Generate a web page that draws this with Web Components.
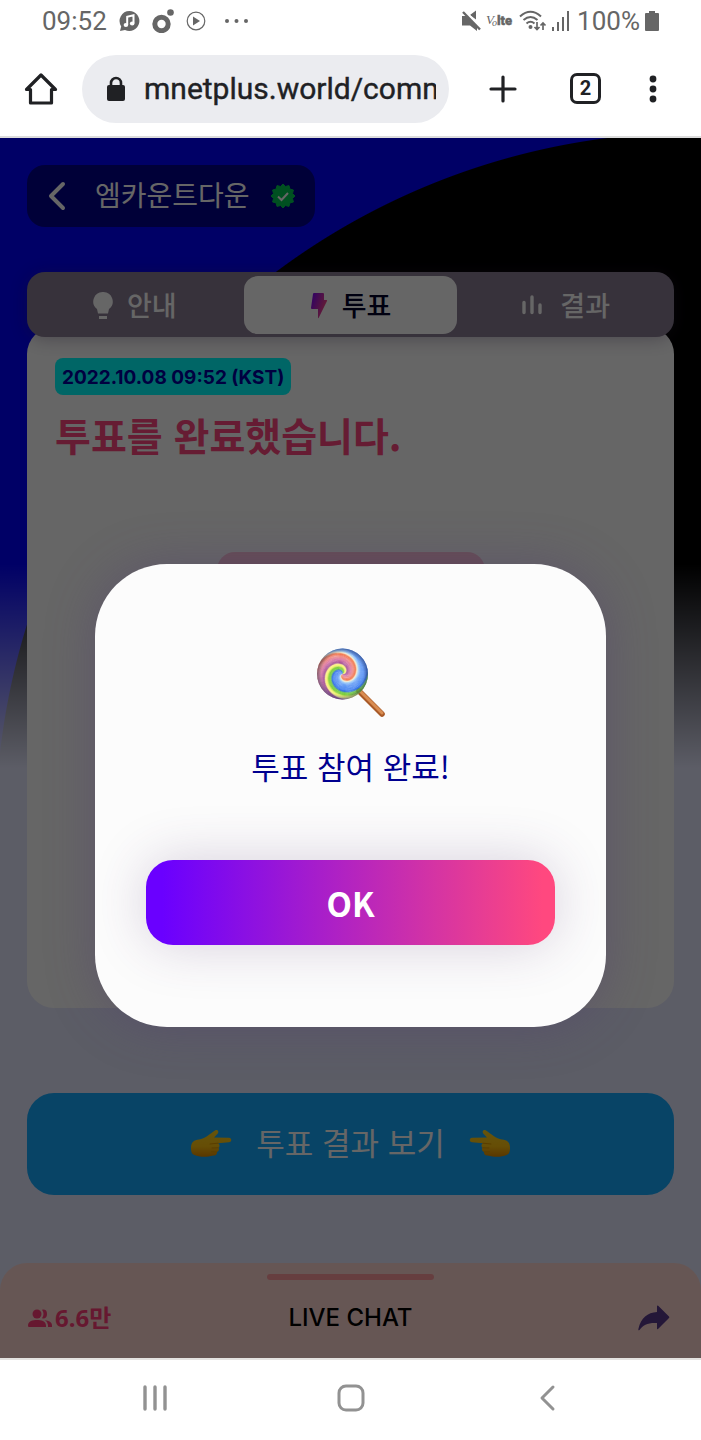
<!DOCTYPE html>
<html lang="ko">
<head>
<meta charset="utf-8">
<meta name="viewport" content="width=device-width, initial-scale=1">
<title>엠카운트다운 투표</title>
<style>
  body { margin: 0; background: #fff; font-family: "Noto Sans CJK KR", sans-serif; }
</style>
</head>
<body>
<phone-screen>
  <status-bar slot="top"></status-bar>
  <browser-bar slot="top" url="mnetplus.world/comm" tabs="2"></browser-bar>
  <vote-page>
    <channel-header>엠카운트다운</channel-header>
    <vote-tabs></vote-tabs>
    <vote-card date="2022.10.08 09:52 (KST)">투표를 완료했습니다.</vote-card>
    <result-button>투표 결과 보기</result-button>
    <chat-sheet count="6.6만">LIVE CHAT</chat-sheet>
    <alert-dialog slot="overlay" action="OK">투표 참여 완료!</alert-dialog>
  </vote-page>
  <system-nav slot="bottom"></system-nav>
</phone-screen>

<script>
const define = (name, render) => customElements.define(name, class extends HTMLElement {
  constructor() { super(); this.attachShadow({ mode: "open" }); }
  connectedCallback() {
    this.shadowRoot.innerHTML =
      `<style>*{box-sizing:border-box} :host{display:block;box-sizing:border-box} svg{display:block;flex:none} button{border:0;background:none;padding:0;margin:0;font:inherit;color:inherit}</style>` + render(this);
  }
});

define("phone-screen", () => `
  <style>
    :host { display: flex; flex-direction: column; min-height: 100vh; }
    main { flex: 1; display: flex; flex-direction: column; }
  </style>
  <slot name="top"></slot><main><slot></slot></main><slot name="bottom"></slot>`);

define("status-bar", () => `
  <style>
    :host { display: flex; align-items: center; justify-content: space-between; height: 42px; padding: 0 42px; color: #666; font: 26px/42px Roboto, sans-serif; }
    div { display: flex; align-items: center; }
    .left { gap: 12px; } .right { gap: 5px; }
    .more { margin-left: 6px; }
  </style>
  <div class="left">
    <span>09:52</span>
    <svg width="21" height="22" viewBox="0 0 21 22"><path fill="#666" d="M10.500 1a10 10 0 1 1-4.500 19L1 21l1.200-4.600A10 10 0 0 1 10.500 1z"/><path d="M8.200 15V6.800l6.300-1.500v7.800" fill="none" stroke="#fff" stroke-width="2"/><ellipse cx="6.900" cy="15" rx="2.300" ry="2" fill="#fff"/><ellipse cx="13.200" cy="13.500" rx="2.300" ry="2" fill="#fff"/></svg>
    <svg width="22" height="24" viewBox="0 0 22 24"><circle cx="9.500" cy="15" r="6.700" fill="none" stroke="#666" stroke-width="5"/><circle cx="18.500" cy="3.500" r="3.300" fill="#666"/></svg>
    <svg width="20" height="20" viewBox="0 0 20 20"><circle cx="10" cy="10" r="8.800" fill="none" stroke="#666" stroke-width="1.200"/><path d="M7 5.500v9l7-4.500z" fill="#666"/></svg>
    <svg class="more" width="26" height="6" viewBox="0 0 26 6" fill="#666"><circle cx="3" cy="3" r="2"/><circle cx="12.500" cy="3" r="2"/><circle cx="22" cy="3" r="2"/></svg>
  </div>
  <div class="right">
    <svg width="19" height="22" viewBox="0 0 19 22"><path fill="#666" d="M0 6h4l11 11v4l-7-5.500H0zM8 5l6-4.500v9z"/><path d="M2 0l17 18" stroke="#fff" stroke-width="2"/><path d="M1 2l17 17.500" stroke="#666" stroke-width="2.400"/></svg>
    <svg width="28" height="20" viewBox="0 0 28 20" fill="#666"><text x="0" y="13" font-family="Liberation Serif, serif" font-style="italic" font-size="13">V</text><text x="6" y="15" font-family="Liberation Serif, serif" font-style="italic" font-size="10">o</text><text x="11" y="14" font-family="Roboto, sans-serif" font-weight="900" font-size="13" stroke="#666" stroke-width=".4">lte</text></svg>
    <svg width="28" height="22" viewBox="0 0 28 22" fill="none" stroke="#666" stroke-width="2"><path d="M1 6.500Q11.500-3 22 6.500M4.500 10Q11.500 4 18.500 10M7.500 13.500q4-3.500 8 0"/><circle cx="11.500" cy="17" r="1" fill="#666"/><path d="M18 12v7M15.500 17l2.500 2.500 2.500-2.500M24 20v-7M21.500 15.500L24 13l2.500 2.500" stroke-width="1.700"/></svg>
    <svg width="20" height="20" viewBox="0 0 20 20" fill="#666"><path d="M0 16h2v4H0zM5 11h2v9H5zM10 6h2v14h-2zM15 0h2v20h-2z"/></svg>
    <span>100%</span>
    <svg width="14" height="20" viewBox="0 0 14 20"><path fill="#666" d="M4 0h6v2h3q1 0 1 1v16q0 1-1 1H1q-1 0-1-1V3q0-1 1-1h3z"/></svg>
  </div>`);

define("browser-bar", el => `
  <style>
    :host { display: flex; align-items: center; height: 96px; padding: 1px 41px 2px 24px; border-bottom: 2px solid #dcdcdc; color: #202124; }
    .pill { flex: 1; display: flex; align-items: center; gap: 18px; height: 68px; margin: 0 40px 0 24px; padding: 0 13px 0 24px; border-radius: 34px; background: #ebecf0; min-width: 0; }
    input { flex: 1; min-width: 0; padding: 0; border: 0; outline: 0; background: none; color: #202124; font: 30px/40px Roboto, sans-serif; -webkit-text-stroke: 0.4px #202124; }
    .tabs { display: grid; place-items: center; width: 31px; height: 31px; margin: 0 45px 0 53px; border: 3px solid #202124; border-radius: 7px; font: 700 20px/25px Roboto, sans-serif; }
  </style>
  <button aria-label="홈"><svg width="34" height="34" viewBox="0 0 34 34" fill="none" stroke="#202124" stroke-width="3.200" stroke-linejoin="round"><path d="M2.500 17.500L17 3l14.500 14.500h-4V31h-21V17.500z"/></svg></button>
  <label class="pill">
    <svg width="20" height="26" viewBox="0 0 20 26"><path d="M5 12V7a5 5 0 0 1 10 0v5" fill="none" stroke="#202124" stroke-width="2.600"/><rect x="1" y="9" width="18" height="16" rx="2" fill="#202124"/></svg>
    <input type="text" aria-label="주소" value="${el.getAttribute("url")}">
  </label>
  <button aria-label="새 탭"><svg width="28" height="28" viewBox="0 0 28 28" stroke="#202124" stroke-width="3.200" stroke-linecap="round"><path d="M14 2v24M2 14h24"/></svg></button>
  <button class="tabs" aria-label="탭 목록">${el.getAttribute("tabs")}</button>
  <button aria-label="메뉴"><svg width="14" height="28" viewBox="0 0 14 28" fill="#202124"><circle cx="7" cy="4" r="3.400"/><circle cx="7" cy="14" r="3.400"/><circle cx="7" cy="24" r="3.400"/></svg></button>`);

define("vote-page", () => `
  <style>
    :host { position: relative; flex: 1; display: flex; flex-direction: column; padding-top: 27px; overflow: hidden;
      background: linear-gradient(transparent 425px, #e6e8ff 630px), radial-gradient(circle 700px at 695px 694px, #000 699px, #0000ff 700px); }
    .shade { position: absolute; inset: 0; display: flex; justify-content: center; align-items: center; padding: 94px 95px 0; background: rgba(0,0,0,.6); }
  </style>
  <slot></slot><div class="shade"><slot name="overlay"></slot></div>`);

define("channel-header", () => `
  <style>
    :host { align-self: flex-start; display: flex; align-items: center; height: 62px; margin: 0 27px; padding: 0 19px 0 20px; border-radius: 18px; background: rgba(0,0,0,.45); color: #fff; font-size: 28px; }
    span { line-height: 42px; padding-bottom: 4px; }
    button { margin-right: 28px; }
    svg.badge { margin-left: 20px; }
  </style>
  <button aria-label="뒤로"><svg width="20" height="32" viewBox="0 0 20 32" fill="none" stroke="#fff" stroke-width="4" stroke-linecap="round" stroke-linejoin="round"><path d="M16 4L4 16l12 12"/></svg></button>
  <span><slot></slot></span>
  <svg class="badge" width="26" height="26" viewBox="0 0 26 26"><polygon fill="#00c853" stroke="#00c853" stroke-linejoin="round" points="${Array.from({ length: 24 }, (_, i) => {
    const a = i * Math.PI / 12, r = i % 2 ? 9.8 : 12; return (13 + r * Math.sin(a)).toFixed(1) + "," + (13 - r * Math.cos(a)).toFixed(1);
  }).join(" ")}"/><path d="M8 13.500l3.500 3.500 6.500-7" fill="none" stroke="#fff" stroke-width="2"/></svg>`);

define("vote-tabs", () => `
  <style>
    :host { position: relative; margin: 45px 27px 0; }
    nav { display: grid; grid-template-columns: repeat(3, 1fr); height: 65px; padding: 4px 0 3px; border-radius: 18px; background: #8a7d94; box-shadow: 0 2px 18px rgba(60,40,80,.35); }
    button { display: flex; justify-content: center; align-items: center; gap: 14px; margin: 0 1px; border-radius: 14px; color: #fff; font-size: 27px; font-weight: 500; line-height: 40px; }
    .on { background: #fff; color: #000028; }
  </style>
  <nav>
    <button><svg width="20" height="27" viewBox="0 0 20 27" fill="#fff"><path d="M10 0a9.500 9.500 0 0 1 6 17l-1 4.500H5L4 17A9.500 9.500 0 0 1 10 0zM6 24h8v3H6z"/></svg>안내</button>
    <button class="on" aria-current="page"><svg width="18" height="27" viewBox="0 0 18 27"><defs><linearGradient id="b" x1="0" x2="1" y2=".5"><stop stop-color="#7000ff"/><stop offset="1" stop-color="#ff4880"/></linearGradient></defs><path fill="url(#b)" d="M4 1h9q1 0 1 1v6h2.500q1 0 .5 1L8.600 26q-.6.500-.6-.5V17H2Q1 17 1 16L3 2q.2-1 1-1z"/></svg>투표</button>
    <button><svg width="24" height="20" viewBox="0 0 24 20" stroke="#fff" stroke-width="3.400" stroke-linecap="round"><path d="M2 7.500v10M10 2v15.500M18 10v7.500"/></svg>결과</button>
  </nav>`);

define("vote-card", el => `
  <style>
    :host { flex: 1; margin: -10px 27px 0; padding: 31px 28px; border-radius: 27px; background: #fff; }
    time { display: inline-block; padding: 2px 7px 0; border-radius: 8px; background: #0ff; color: #0000a0; font: 700 19px/35px Inter, sans-serif; vertical-align: top; }
    h1 { margin: 11px 0 90px; color: #ff4880; font-size: 39px; font-weight: 700; line-height: 56px; }
    .ticket { width: 268px; height: 268px; margin: 0 auto; border-radius: 18px; background: #ffc4d6; }
  </style>
  <time datetime="2022-10-08T09:52+09:00">${el.getAttribute("date")}</time>
  <h1><slot></slot></h1>
  <div class="ticket"></div>`);

const hand = flip => `<svg width="42" height="30" viewBox="0 0 42 30"${flip ? ' style="transform:scaleX(-1)"' : ""}>
  <defs><linearGradient id="h" x2="0" y2="1"><stop stop-color="#ffd21f"/><stop offset=".6" stop-color="#ffc20f"/><stop offset="1" stop-color="#e08a00"/></linearGradient></defs>
  <path fill="url(#h)" d="M1 19C1 13 4 11 9 10.500 15 9.500 20 5 25 1.500c2.500-1.300 4.300 1 2.800 3L24 8.500l15 .3c3 .2 3 4.200 0 4.400l-11 1c2 1.300 2 3.300.5 4.500 1.200 1.800.3 3.500-1.500 4.200.3 2.500-1.500 3.600-3.500 3.600C16 28.500 9 28 4.500 26 1.500 25 1 22 1 19z"/>
  <path d="M28 14.200l-8 .8M28 18.800l-6 .2M26.500 23l-5-.3" fill="none" stroke="#e09a00" stroke-width="1" stroke-linecap="round"/></svg>`;

define("result-button", () => `
  <style>
    :host { margin: 85px 27px 68px; }
    button { display: flex; justify-content: center; align-items: center; gap: 24px; width: 100%; height: 102px; border-radius: 27px; background: #14aaff; color: #fff; font-size: 31px; }
    span { line-height: 46px; padding-bottom: 4px; }
  </style>
  <button>${hand(false)}<span><slot></slot></span>${hand(true)}</button>`);

define("chat-sheet", el => `
  <style>
    :host { height: 95px; padding: 11px 28px 0; border-radius: 27px 27px 0 0; background: #ffd8d3; }
    .grip { width: 167px; height: 6px; margin: 0 auto; border-radius: 3px; background: #ff9c9f; }
    .row { display: grid; grid-template-columns: 1fr auto 1fr; align-items: center; height: 76px; }
    .count { display: flex; align-items: center; gap: 3px; color: #ff3d78; font: 700 24px/32px "Noto Sans", "Noto Sans CJK KR", sans-serif; }
    .title { color: #000; font: 500 24px/32px Inter, sans-serif; }
    .share { justify-self: end; margin-right: 3px; }
  </style>
  <div class="grip"></div>
  <div class="row">
    <span class="count"><svg width="24" height="18" viewBox="0 0 24 18" fill="#ff3d78"><circle cx="9" cy="5" r="4.500"/><path d="M1 18q-1 0-1-1.500C0 12 5 11 9 11s9 1 9 5.500V18zM14 .7q5-.8 5 4.300t-5 4.300q3-4.300 0-8.600zM17 11.300c4 .5 7 2 7 5.200V18h-4v-2q0-3-3-4.700z"/></svg>${el.getAttribute("count")}</span>
    <span class="title"><slot></slot></span>
    <button class="share" aria-label="공유"><svg width="32" height="26" viewBox="0 0 32 26"><path fill="#5b3a8c" d="M19 1q.3-1 1.200-.2L31 11.500q.8.800 0 1.600L20 24q-1 .8-1-.4V18C10 17.500 5 20 1.500 25 0 26 .3 24.500.5 23.500 3 13 9.500 7.500 19 7z"/></svg></button>
  </div>`);

/* Candy swirl: thin spiral slices coloured around a gradient wheel. */
const lollipop = () => {
  const stops = [[0, 60, 125, 240], [20, 20, 90, 225], [38, 105, 200, 60], [62, 110, 200, 30], [85, 245, 245, 90], [105, 250, 235, 130], [120, 150, 60, 140], [165, 215, 110, 160], [205, 240, 130, 120], [235, 240, 100, 50], [252, 250, 240, 200], [272, 150, 200, 250], [300, 90, 150, 245], [360, 60, 125, 240]];
  const color = a => {
    const i = stops.findIndex(s => s[0] > a), p = stops[i - 1], q = stops[i], t = (a - p[0]) / (q[0] - p[0]);
    return `rgb(${[1, 2, 3].map(k => Math.round(p[k] + (q[k] - p[k]) * t))})`;
  };
  const radii = Array.from({ length: 27 }, (_, i) => 26 - i);
  const pt = (r, a) => { const th = (a + 300 * (0.9 - r / 25.5)) * Math.PI / 180; return (26.5 + r * Math.cos(th)).toFixed(2) + " " + (27 + r * Math.sin(th)).toFixed(2); };
  let out = "";
  for (let a = 0; a < 360; a += 6)
    out += `<path fill="${color(a + 3)}" d="M${radii.map(r => pt(r, a)).join("L")}L${radii.slice().reverse().map(r => pt(r, a + 7.5)).join("L")}z"/>`;
  return `<svg width="70" height="70" viewBox="0 0 70 70" role="img" aria-label="막대사탕">
    <defs><clipPath id="c"><circle cx="26.500" cy="27" r="25.500"/></clipPath>
    <radialGradient id="s"><stop offset=".82" stop-color="#203060" stop-opacity="0"/><stop offset="1" stop-color="#203060" stop-opacity=".55"/></radialGradient></defs>
    <path d="M43 44L66 67" stroke="#a95a28" stroke-width="5.600" stroke-linecap="round"/><path d="M43.500 43.500L66 66" stroke="#d98d52" stroke-width="3" stroke-linecap="round"/>
    <g clip-path="url(#c)">${out}</g><circle cx="26.500" cy="27" r="25.500" fill="url(#s)"/></svg>`;
};

define("alert-dialog", el => `
  <style>
    :host { flex: 1; }
    section { display: flex; flex-direction: column; align-items: center; padding: 83px 51px 82px; border-radius: 72px; background: #fcfcfc; box-shadow: 0 0 48px rgba(80,60,110,.4); }
    p { margin: 25px 0 70px; color: #00008f; font-size: 31px; line-height: 48px; }
    button { width: 100%; height: 85px; padding-top: 2px; border-radius: 27px; background: linear-gradient(90deg, #6a00ff 4%, #ff487f 97%); box-shadow: 0 0 54px rgba(80,50,110,.22); color: #fff; font-size: 33px; font-weight: 700; line-height: 50px; }
  </style>
  <section role="dialog" aria-modal="true">${lollipop()}<p><slot></slot></p><button>${el.getAttribute("action")}</button></section>`);

define("system-nav", () => `
  <style>
    :host { height: 82px; border-top: 2px solid #e4e2e0; background: #fff; }
    nav { display: grid; grid-template-columns: repeat(3, 196px); justify-content: center; justify-items: center; align-items: center; height: 76px; }
  </style>
  <nav>
    <button aria-label="최근 앱"><svg width="26" height="28" viewBox="0 0 26 28" stroke="#929292" stroke-width="3.400" stroke-linecap="round"><path d="M3 3v22M13 3v22M23 3v22"/></svg></button>
    <button aria-label="홈"><svg width="28" height="28" viewBox="0 0 28 28" fill="none" stroke="#929292" stroke-width="3"><rect x="2" y="2" width="24" height="24" rx="7"/></svg></button>
    <button aria-label="뒤로"><svg width="18" height="28" viewBox="0 0 18 28" fill="none" stroke="#929292" stroke-width="3" stroke-linecap="round" stroke-linejoin="round"><path d="M15 3L4 14l11 11"/></svg></button>
  </nav>`);
</script>
</body>
</html>
